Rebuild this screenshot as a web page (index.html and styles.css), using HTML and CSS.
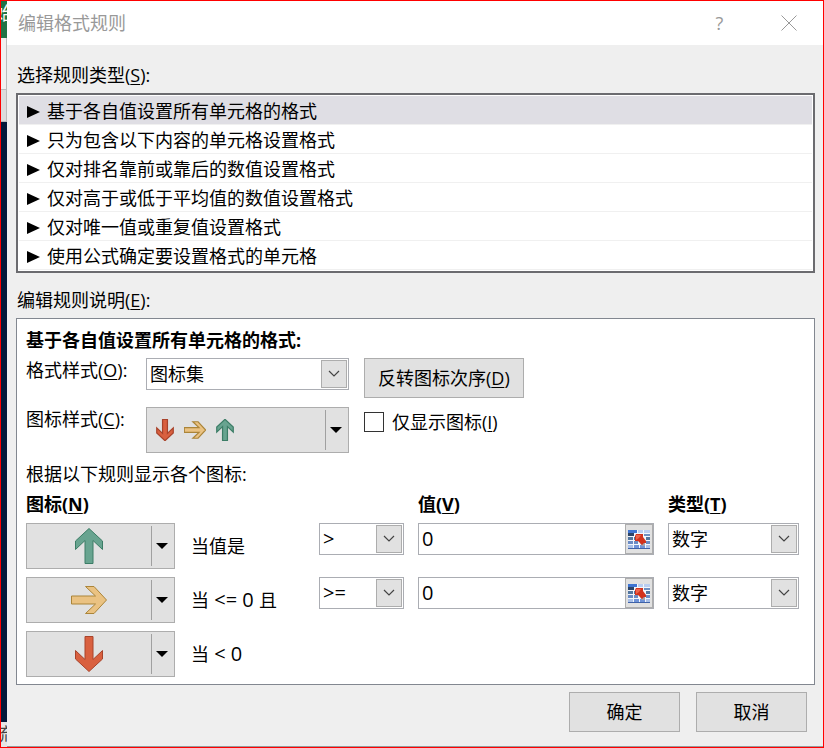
FILE: index.html
```html
<!DOCTYPE html>
<html lang="zh-CN">
<head>
  <meta charset="UTF-8">
  <meta name="viewport" content="width=device-width, initial-scale=1.0">
  <title>编辑格式规则</title>
  <link rel="stylesheet" href="styles.css">
</head>
<body>
  <!-- Shared icons -->
  <svg class="sprite" aria-hidden="true">
    <symbol id="arrow-up" viewBox="0 0 36 36">
      <path d="M18 0.5 L31.5 13 V21.5 L22 12.5 V35.5 H14 V12.5 L4.5 21.5 V13 Z"/>
    </symbol>
    <symbol id="arrow-right" viewBox="0 0 36 36">
      <path d="M35.5 18 L23 31.5 H14.5 L24.5 22 H0.5 V14 H24.5 L14.5 4.5 H23 Z"/>
    </symbol>
    <symbol id="arrow-down" viewBox="0 0 36 36">
      <path d="M18 35.5 L31.5 23 V14.5 L22 23.5 V0.5 H14 V23.5 L4.5 14.5 V23 Z"/>
    </symbol>
    <symbol id="chevron" viewBox="0 0 12 8">
      <path d="M1 1 L6 6 L11 1" fill="none" stroke="#444" stroke-width="1.2"/>
    </symbol>
    <symbol id="caret" viewBox="0 0 12 6">
      <path d="M0 0 H12 L6 6 Z"/>
    </symbol>
    <symbol id="range" viewBox="0 0 22 19">
      <path d="M0 0 H22 V19 H0 Z" fill="#f2f6fc"/>
      <path d="M0 0 H9 V3 H0 Z" fill="#3f74d1"/>
      <path d="M10 0 H15 V3 H10 Z M16 0 H22 V3 H16 Z" fill="#b9cdf0"/>
      <path d="M0 3 H6 V6 H0 Z" fill="#2c4468"/>
      <path d="M16 4 H22 V6 H16 Z" fill="#6f8fc0"/>
      <path d="M0 7 H5 V10 H0 Z M6 7 H8 V10 H6 Z M18 7 H22 V10 H18 Z" fill="#54779f"/>
      <path d="M0 11 H5 V14 H0 Z M6 11 H10 V14 H6 Z M18 11 H22 V14 H18 Z" fill="#6b8cc4"/>
      <path d="M0 15 H5 V18 H0 Z M18 15 H22 V18 H18 Z" fill="#a9c0e8"/>
      <path d="M6 15 H11 V18 H6 Z M12 15 H17 V18 H12 Z" fill="#6f93d8"/>
      <path d="M0 18 H22 V19 H0 Z" fill="#3f62a8"/>
      <path d="M12 13 H17 V16 H14 Z" fill="#a3a3ad"/>
      <path d="M8 4 H15 V7 L18 11 V13 H16 L14 15 L10 11 L7 11 V6 Z" fill="#d2321c"/>
      <path d="M8 5 H13 L11 8 L8 10 Z" fill="#ee6249"/>
    </symbol>
  </svg>

  <div class="screen">
    <!-- Edge of the workbook window behind the dialog -->
    <div class="backdrop" aria-hidden="true">
      <div class="backdrop-tab">始</div>
      <div class="backdrop-ribbon"></div>
      <div class="backdrop-ribbon last"></div>
      <div class="backdrop-sheet"></div>
      <div class="backdrop-status">流</div>
    </div>

    <main class="dialog">
      <header class="titlebar">
        <h1>编辑格式规则</h1>
        <button type="button" class="title-btn" aria-label="帮助">?</button>
        <button type="button" class="title-btn" aria-label="关闭">
          <svg width="16" height="16" viewBox="0 0 16 16"><path d="M0.5 0.5 L15.5 15.5 M15.5 0.5 L0.5 15.5" stroke="#999" fill="none"/></svg>
        </button>
      </header>

      <form class="content">
        <label class="section-label" for="rule-type">选择规则类型(<u>S</u>):</label>
        <select id="rule-type" class="rule-list" size="6">
          <option selected>基于各自值设置所有单元格的格式</option>
          <option>只为包含以下内容的单元格设置格式</option>
          <option>仅对排名靠前或靠后的数值设置格式</option>
          <option>仅对高于或低于平均值的数值设置格式</option>
          <option>仅对唯一值或重复值设置格式</option>
          <option>使用公式确定要设置格式的单元格</option>
        </select>

        <h2 class="section-label">编辑规则说明(<u>E</u>):</h2>
        <section class="panel">
          <h3>基于各自值设置所有单元格的格式:</h3>

          <div class="style-grid">
            <label for="format-style">格式样式(<u>O</u>):</label>
            <div class="combo">
              <select id="format-style"><option>图标集</option></select>
              <span class="combo-arrow"><svg width="12" height="8"><use href="#chevron"/></svg></span>
            </div>
            <button type="button" class="btn">反转图标次序(<u>D</u>)</button>

            <label for="icon-style">图标样式(<u>C</u>):</label>
            <button type="button" id="icon-style" class="icon-btn">
              <span class="icon-set">
                <svg class="red" viewBox="0 0 36 36"><use href="#arrow-down"/></svg>
                <svg class="yellow" viewBox="0 0 36 36"><use href="#arrow-right"/></svg>
                <svg class="green" viewBox="0 0 36 36"><use href="#arrow-up"/></svg>
              </span>
              <span class="drop"><svg width="12" height="6"><use href="#caret"/></svg></span>
            </button>
            <label class="check"><input type="checkbox"><span>仅显示图标(<u>I</u>)</span></label>
          </div>

          <p class="hint">根据以下规则显示各个图标:</p>

          <div class="rules-grid">
            <h4 class="wide">图标(<u>N</u>)</h4>
            <h4>值(<u>V</u>)</h4>
            <h4>类型(<u>T</u>)</h4>

            <button type="button" class="icon-btn" aria-label="绿色上箭头">
              <span class="icon-one"><svg class="green" viewBox="0 0 36 36"><use href="#arrow-up"/></svg></span>
              <span class="drop"><svg width="12" height="6"><use href="#caret"/></svg></span>
            </button>
            <span class="cond">当值是</span>
            <div class="combo operator">
              <select aria-label="运算符 1"><option>&gt;</option></select>
              <span class="combo-arrow"><svg width="12" height="8"><use href="#chevron"/></svg></span>
            </div>
            <div class="ref-box">
              <input type="text" value="0" aria-label="值 1">
              <button type="button" aria-label="选择区域 1"><svg width="22" height="19"><use href="#range"/></svg></button>
            </div>
            <div class="combo">
              <select aria-label="类型 1"><option>数字</option></select>
              <span class="combo-arrow"><svg width="12" height="8"><use href="#chevron"/></svg></span>
            </div>

            <button type="button" class="icon-btn" aria-label="黄色右箭头">
              <span class="icon-one"><svg class="yellow" viewBox="0 0 36 36"><use href="#arrow-right"/></svg></span>
              <span class="drop"><svg width="12" height="6"><use href="#caret"/></svg></span>
            </button>
            <span class="cond">当<span class="expr"> &lt;= 0 </span>且</span>
            <div class="combo operator">
              <select aria-label="运算符 2"><option>&gt;=</option></select>
              <span class="combo-arrow"><svg width="12" height="8"><use href="#chevron"/></svg></span>
            </div>
            <div class="ref-box">
              <input type="text" value="0" aria-label="值 2">
              <button type="button" aria-label="选择区域 2"><svg width="22" height="19"><use href="#range"/></svg></button>
            </div>
            <div class="combo">
              <select aria-label="类型 2"><option>数字</option></select>
              <span class="combo-arrow"><svg width="12" height="8"><use href="#chevron"/></svg></span>
            </div>

            <button type="button" class="icon-btn" aria-label="红色下箭头">
              <span class="icon-one"><svg class="red" viewBox="0 0 36 36"><use href="#arrow-down"/></svg></span>
              <span class="drop"><svg width="12" height="6"><use href="#caret"/></svg></span>
            </button>
            <span class="cond">当<span class="expr"> &lt; 0</span></span>
          </div>
        </section>

        <footer class="actions">
          <button type="button" class="btn">确定</button>
          <button type="button" class="btn">取消</button>
        </footer>
      </form>
    </main>
  </div>
</body>
</html>
```

FILE: styles.css
```css
/* Global Styles */
* {
  box-sizing: border-box;
}

body {
  margin: 0;
  font-family: 'Open Sans', 'Noto Sans CJK SC', sans-serif;
  font-size: 18px;
  line-height: 24px;
  color: #000;
}

h1, h2, h3, h4, p {
  margin: 0;
  font-size: 18px;
  font-weight: 400;
}

button, input, select {
  font: inherit;
  color: inherit;
}

u {
  text-underline-offset: 2px;
  text-decoration-thickness: 1px;
}

svg {
  display: block;
}

.sprite {
  display: none;
}

.screen {
  display: flex;
  min-height: 100vh;
  border: 1px solid #f00;
}

/* Backdrop */
.backdrop {
  display: flex;
  flex-direction: column;
  width: 6px;
  overflow: hidden;
}

.backdrop-tab {
  display: flex;
  justify-content: center;
  height: 37px;
  background-color: #217346;
  color: #fff;
}

.backdrop-ribbon {
  height: 52px;
  background-color: #f0f0f0;
  border-bottom: 1px solid #bbb;
  border-right: 1px solid #bbb;
}

.backdrop-ribbon.last {
  height: 32px;
  background-color: #dcdcdc;
}

.backdrop-sheet {
  flex: 1;
  background-color: #04193a;
}

.backdrop-status {
  display: flex;
  justify-content: center;
  height: 25px;
  background-color: #e6e6e6;
  color: #444;
}

/* Dialog */
.dialog {
  flex: 1;
  background-color: #efefef;
  border-bottom: 1px solid #999;
}

.titlebar {
  display: flex;
  align-items: center;
  height: 44px;
  padding-left: 11px;
  background-color: #fff;
  color: #999;
}

.titlebar h1 {
  flex: 1;
}

.title-btn {
  display: flex;
  align-items: center;
  justify-content: center;
  width: 69px;
  height: 44px;
  padding: 0;
  border: none;
  background: none;
}

.content {
  padding: 17px 8px 12px 9px;
}

.section-label {
  display: block;
  padding-left: 1px;
  line-height: 26px;
}

/* Rule list */
.rule-list {
  display: block;
  width: 100%;
  height: 180px;
  margin: 5px 0 14px;
  padding: 1px;
  border: 2px solid #6b6b6f;
  border-radius: 0;
  background-color: #fff;
  overflow: hidden;
  outline: none;
}

.rule-list option {
  height: 29px;
  padding: 1px 0 0 8px;
  border-bottom: 1px solid #f0f0f0;
  line-height: 28px;
  color: #000;
}

.rule-list option::before {
  content: '';
  display: inline-block;
  width: 13px;
  height: 12px;
  margin-right: 7px;
  background-color: #000;
  clip-path: polygon(0 0, 100% 50%, 0 100%);
}

.rule-list option:checked {
  background: #dfdee4 linear-gradient(#dfdee4, #dfdee4);
}

/* Panel */
.panel {
  margin-top: 5px;
  padding: 9px 15px 7px 9px;
  border: 1px solid #828790;
  background-color: #fff;
}

.panel h3,
.panel h4 {
  font-weight: 700;
}

.style-grid {
  display: grid;
  grid-template-columns: 105px 203px 1fr;
  grid-template-rows: 41px 46px;
  gap: 8px 15px;
  align-items: start;
  margin-top: 6px;
}

.style-grid .btn {
  height: 40px;
  padding: 0 13px;
  justify-self: start;
}

.hint {
  margin: 9px 0 7px;
}

.btn {
  border: 1px solid #adadad;
  background-color: #e1e1e1;
}

/* Combo box */
.combo {
  position: relative;
}

.combo select {
  display: block;
  width: 100%;
  height: 32px;
  padding: 0 30px 0 3px;
  border: 1px solid #abadb3;
  border-radius: 0;
  background-color: #fff;
  appearance: none;
}

.combo-arrow {
  position: absolute;
  top: 2px;
  right: 2px;
  bottom: 2px;
  display: flex;
  align-items: center;
  justify-content: center;
  width: 26px;
  border: 1px solid #adadad;
  background-color: #e1e1e1;
  pointer-events: none;
}

/* Icon buttons */
.icon-btn {
  display: flex;
  width: 100%;
  height: 46px;
  padding: 2px 0;
  border: 1px solid #adadad;
  background-color: #e1e1e1;
}

.icon-set {
  display: flex;
  flex: 1;
  align-items: center;
  gap: 8px;
  height: 40px;
  padding-left: 7px;
}

.icon-set svg {
  width: 22px;
  height: 22px;
  stroke-width: 2;
}

.icon-one {
  display: flex;
  flex: 1;
  align-items: center;
  justify-content: center;
  height: 40px;
}

.icon-one svg {
  width: 36px;
  height: 36px;
}

.drop {
  display: flex;
  align-items: center;
  justify-content: center;
  width: 23px;
  height: 40px;
  padding-right: 3px;
  border-left: 1px solid #a0a0a0;
}

.red { fill: #d9603f; stroke: #a8432b; }
.yellow { fill: #eac282; stroke: #ab8539; }
.green { fill: #68a490; stroke: #3c7d66; }

/* Checkbox */
.check {
  display: flex;
  align-items: center;
  gap: 8px;
  padding-top: 3px;
}

.check input {
  width: 20px;
  height: 20px;
  margin: 0;
  border: 1px solid #333;
  background-color: #fff;
  appearance: none;
}

.check input:checked {
  background-color: #333;
}

/* Rules */
.rules-grid {
  display: grid;
  grid-template-columns: 149px 116px 85px minmax(0, 1fr) 131px;
  gap: 8px 14px;
  align-items: start;
}

.rules-grid h4 {
  line-height: 22px;
}

.rules-grid .wide {
  grid-column: span 3;
}

.cond {
  padding-left: 2px;
  line-height: 46px;
}

.expr,
.operator select,
.ref-box input {
  font-size: 20px;
}

.ref-box {
  display: flex;
  height: 32px;
  border: 1px solid #abadb3;
}

.ref-box input {
  flex: 1;
  min-width: 0;
  padding: 0 3px;
  border: none;
  background-color: #fff;
}

.ref-box button {
  display: flex;
  align-items: center;
  justify-content: center;
  width: 28px;
  padding: 0;
  border: 1px solid #adadad;
  background-color: #e1e1e1;
}

/* Footer buttons */
.actions {
  display: flex;
  justify-content: flex-end;
  gap: 16px;
  padding: 7px 8px 0 0;
}

.actions .btn {
  width: 111px;
  height: 40px;
}
```
